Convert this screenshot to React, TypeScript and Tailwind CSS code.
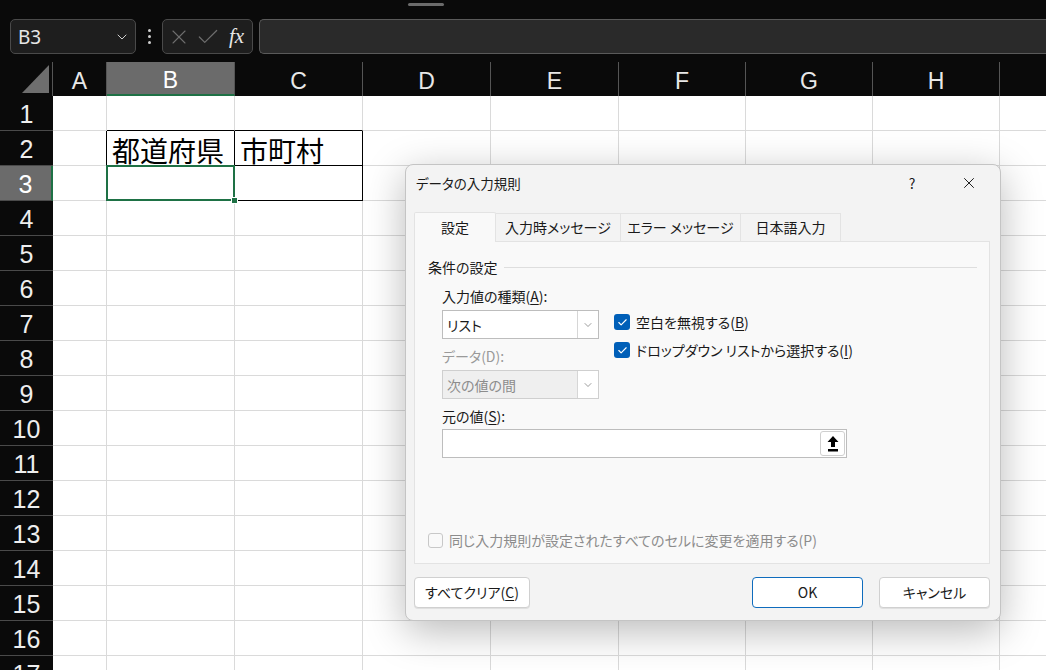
import React from 'react';
import { Check, ChevronDown, X } from 'lucide-react';

const COLS = [
  { l: 'A', w: 'w-[54px]' },
  { l: 'B', w: 'w-[128px]' },
  { l: 'C', w: 'w-[128px]' },
  { l: 'D', w: 'w-[128px]' },
  { l: 'E', w: 'w-[128px]' },
  { l: 'F', w: 'w-[127px]' },
  { l: 'G', w: 'w-[127px]' },
  { l: 'H', w: 'w-[127px]' },
  { l: '', w: 'w-[127px]' },
];
const ROWS = Array.from({ length: 17 }, (_, i) => i + 1);

const UI = "font-['Noto_Sans_CJK_JP','Noto_Sans',sans-serif] [font-feature-settings:'palt']";

function cellBorder(r: number, c: string) {
  const bottomBlack = r <= 3 && (c === 'B' || c === 'C');
  const rightBlack = (r === 2 || r === 3) && (c === 'A' || c === 'B' || c === 'C');
  return `${bottomBlack ? 'border-b-black' : 'border-b-[#dadada]'} ${
    rightBlack ? 'border-r-black' : 'border-r-[#dadada]'
  }`;
}

const TopBar = () => (
  <div className="relative h-[62px] shrink-0 bg-[#0a0a0a] flex items-start pt-[19px] pl-[10px]">
    <div className="absolute top-[3px] left-[408px] w-[36px] h-[3px] rounded-full bg-[#6b6b6b]" />
    {/* Name box */}
    <div className="w-[126px] h-[35px] rounded-[5px] border border-[#4a4a4a] bg-[#1e1e1e] flex items-center pl-[7px] pr-[5px]">
      <span className="flex-1 pt-[2px] text-[19px] text-[#e6e6e6] font-['Noto_Sans',sans-serif]">B3</span>
      <ChevronDown size={16} strokeWidth={1.5} className="text-[#cfcfcf]" />
    </div>
    <div className="w-[26px] h-[35px] flex flex-col items-center justify-center gap-[3px]">
      <span className="w-[3px] h-[3px] rounded-full bg-[#cfcfcf]" />
      <span className="w-[3px] h-[3px] rounded-full bg-[#cfcfcf]" />
      <span className="w-[3px] h-[3px] rounded-full bg-[#cfcfcf]" />
    </div>
    {/* fx box */}
    <div className="w-[91px] h-[35px] rounded-[5px] border border-[#4a4a4a] bg-[#1e1e1e] flex items-center pl-[4px] gap-[4px]">
      <X size={24} strokeWidth={1.1} className="text-[#6e6e6e]" />
      <Check size={26} strokeWidth={1.1} className="text-[#6e6e6e]" />
      <span className="ml-[4px] text-[21px] italic text-[#e6e6e6] font-['Liberation_Serif',serif] leading-none">fx</span>
    </div>
    {/* Formula bar */}
    <div className="ml-[6px] flex-1 h-[35px] rounded-l-[5px] border border-r-0 border-[#5a5a5a] bg-[#2a2a2a]" />
  </div>
);

const Sheet = () => (
  <div className="flex flex-col">
    {/* Column headers */}
    <div className="flex h-[34px] bg-[#0a0a0a]">
      <div className="w-[53px] shrink-0 border-r border-[#555] flex items-end justify-end pr-[3px] pb-[3px]">
        <svg width="27" height="28" viewBox="0 0 27 28">
          <polygon points="0,28 27,0 27,28" fill="#6e6e6e" />
        </svg>
      </div>
      {COLS.map((c, i) => (
        <div
          key={i}
          className={`${c.w} shrink-0 border-r border-[#555] flex items-center justify-center pt-[5px] text-[23px] font-['Liberation_Sans',sans-serif] ${
            c.l === 'B' ? 'bg-[#6b6b6b] text-white border-b-2 border-b-[#1e7145]' : 'text-[#e8e8e8]'
          }`}
        >
          {c.l}
        </div>
      ))}
    </div>
    {/* Rows */}
    {ROWS.map((r) => (
      <div key={r} className="flex h-[35px]">
        <div
          className={`w-[53px] shrink-0 border-b border-[#4a4a4a] flex items-center justify-center pt-[4px] text-[25px] font-['Liberation_Sans',sans-serif] ${
            r === 3 ? 'bg-[#6b6b6b] text-white border-r-2 border-r-[#1e7145]' : 'bg-[#0a0a0a] text-[#eeeeee]'
          }`}
        >
          {r}
        </div>
        {COLS.map((c, i) => (
          <div
            key={i}
            className={`${c.w} shrink-0 bg-white border-r border-b ${cellBorder(r, c.l)} ${
              r === 3 && c.l === 'B' ? 'relative z-10' : ''
            } flex items-center pl-[5px] pt-[3px] text-[28px] leading-none text-black font-['Noto_Sans_CJK_JP',sans-serif]`}
          >
            {r === 2 && c.l === 'B' && '都道府県'}
            {r === 2 && c.l === 'C' && '市町村'}
            {r === 3 && c.l === 'B' && (
              <>
                <div className="absolute -left-[1px] -top-[1px] -right-[1px] -bottom-[1px] border-2 border-[#1e7145]" />
                <div className="absolute -right-[4px] -bottom-[4px] w-[7px] h-[7px] bg-[#1e7145] border border-white" />
              </>
            )}
          </div>
        ))}
      </div>
    ))}
  </div>
);

const Acc = ({ k }: { k: string }) => <span className="underline underline-offset-2">{k}</span>;

const BlueCheck = () => (
  <span className="w-[16px] h-[16px] rounded-[3px] bg-[#005fb8] flex items-center justify-center shrink-0">
    <Check size={11} strokeWidth={2.5} className="text-white" />
  </span>
);

const SelectBox = ({ value, disabled }: { value: string; disabled?: boolean }) => (
  <div
    className={`w-[157px] h-[29px] border flex ${
      disabled ? 'border-[#cfcfcf] bg-[#efefef]' : 'border-[#bdbdbd] bg-white'
    }`}
  >
    <span className={`flex-1 pl-[4px] flex items-center text-[14px] ${disabled ? 'text-[#8c8c8c]' : 'text-[#1a1a1a]'}`}>
      {value}
    </span>
    <span className="w-[21px] border-l border-[#d6d6d6] bg-white flex items-center justify-center">
      <ChevronDown size={12} strokeWidth={1.3} className="text-[#666]" />
    </span>
  </div>
);

const Dialog = () => (
  <div
    className={`absolute left-[405px] top-[164px] w-[596px] h-[457px] rounded-[8px] border border-[#c4c4c4] bg-[#f3f3f3] shadow-[0_10px_40px_rgba(0,0,0,0.28)] flex flex-col text-[#1a1a1a] ${UI}`}
  >
    {/* Title */}
    <div className="h-[36px] flex items-center pl-[10px] pr-[8px]">
      <span className="flex-1 text-[13.5px]">データの入力規則</span>
      <span className="w-[46px] text-center text-[14px]">?</span>
      <span className="ml-[11px] w-[46px] flex justify-center">
        <X size={18} strokeWidth={1.3} className="text-[#1a1a1a]" />
      </span>
    </div>

    {/* Tabs */}
    <div className="mt-[11px] ml-[8px] mr-[10px] flex items-end relative z-10 text-[14px]">
      <div className="w-[82px] h-[30px] -mb-px bg-[#f9f9f9] border border-b-0 border-[#e3e3e3] rounded-t-[2px] flex items-center justify-center">
        設定
      </div>
      <div className="w-[125px] h-[28px] bg-[#f3f3f3] border border-l-0 border-b-0 border-[#e3e3e3] flex items-center justify-center">
        入力時メッセージ
      </div>
      <div className="w-[120px] h-[28px] bg-[#f3f3f3] border border-l-0 border-b-0 border-[#e3e3e3] flex items-center justify-center">
        エラー メッセージ
      </div>
      <div className="w-[100px] h-[28px] bg-[#f3f3f3] border border-l-0 border-b-0 border-[#e3e3e3] flex items-center justify-center">
        日本語入力
      </div>
    </div>

    {/* Panel */}
    <div className="ml-[8px] mr-[10px] h-[323px] bg-[#f9f9f9] border border-[#e3e3e3] flex flex-col text-[14px] leading-[20px]">
      <div className="mt-[15px] pl-[13px] pr-[12px] flex items-center gap-[6px]">
        <span>条件の設定</span>
        <span className="flex-1 h-px bg-[#dedede]" />
      </div>

      <div className="pl-[27px] flex">
        <div className="w-[157px] flex flex-col">
          <span className="mt-[9px] whitespace-nowrap">
            入力値の種類(<Acc k="A" />):
          </span>
          <div className="mt-[4px]">
            <SelectBox value="リスト" />
          </div>
          <span className="mt-[7px] text-[#9a9a9a]">データ(D):</span>
          <div className="mt-[4px]">
            <SelectBox value="次の値の間" disabled />
          </div>
        </div>
        <div className="ml-[15px] pt-[35px] flex flex-col gap-[8px]">
          <div className="h-[20px] flex items-center gap-[6px]">
            <BlueCheck />
            <span>
              空白を無視する(<Acc k="B" />)
            </span>
          </div>
          <div className="h-[20px] flex items-center gap-[6px]">
            <BlueCheck />
            <span>
              ドロップダウン リストから選択する(<Acc k="I" />)
            </span>
          </div>
        </div>
      </div>

      <div className="pl-[27px] flex flex-col">
        <span className="mt-[7px]">
          元の値(<Acc k="S" />):
        </span>
        <div className="mt-[3px] w-[405px] h-[29px] bg-white border border-[#bdbdbd] flex justify-end items-center pr-[1px]">
          <span className="w-[25px] h-[25px] rounded-[3px] border border-[#cfcfcf] bg-white flex items-center justify-center">
            <svg width="14" height="16" viewBox="0 0 14 16">
              <path d="M7 0 L12.5 6 H9 V11 H5 V6 H1.5 Z" fill="#000" />
              <rect x="2" y="13" width="10" height="2.5" fill="#000" />
            </svg>
          </span>
        </div>
      </div>

      <div className="mt-[72px] pl-[13px] flex items-center gap-[6px] text-[#8c8c8c]">
        <span className="w-[15px] h-[15px] rounded-[3px] border border-[#c8c8c8] bg-[#f9f9f9]" />
        <span>同じ入力規則が設定されたすべてのセルに変更を適用する(P)</span>
      </div>
    </div>

    {/* Buttons */}
    <div className="mt-[13px] ml-[8px] mr-[10px] flex items-center text-[14px]">
      <button className="w-[116px] h-[31px] rounded-[4px] border border-[#d0d0d0] bg-white shadow-[0_1px_0_rgba(0,0,0,0.08)]">
        すべてクリア(<Acc k="C" />)
      </button>
      <span className="flex-1" />
      <button className="w-[111px] h-[31px] rounded-[4px] border border-[#0f6cbd] bg-white">OK</button>
      <button className="ml-[16px] w-[111px] h-[31px] rounded-[4px] border border-[#d0d0d0] bg-white shadow-[0_1px_0_rgba(0,0,0,0.08)]">
        キャンセル
      </button>
    </div>
  </div>
);

export default function App() {
  return (
    <div className="relative w-[1046px] h-[670px] overflow-hidden bg-[#0a0a0a]">
      <TopBar />
      <Sheet />
      <Dialog />
    </div>
  );
}
